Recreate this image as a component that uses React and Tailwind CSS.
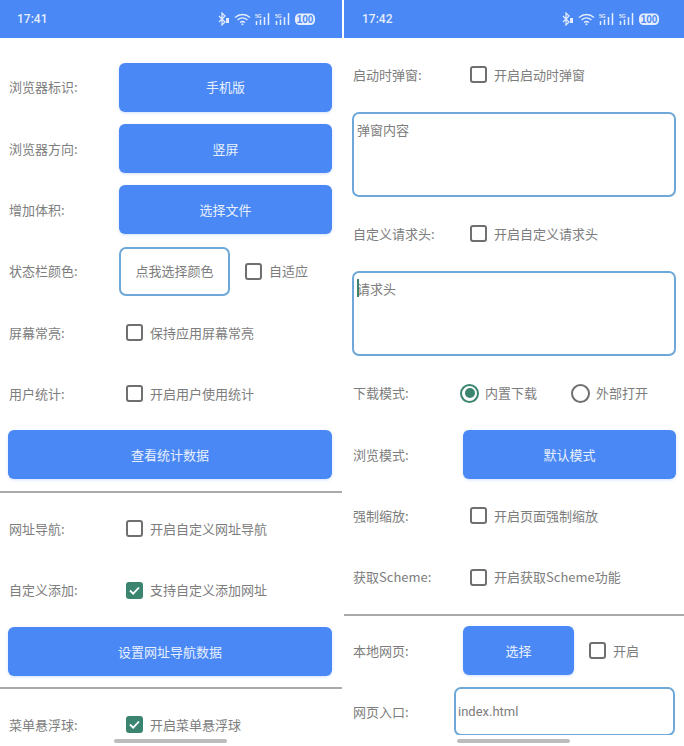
import React from "react";

const font = { fontFamily: '"Noto Sans CJK SC", "Noto Sans", sans-serif' };

function StatusIcons() {
  return (
    <svg width="98" height="14" viewBox="0 0 98 14" fill="none" stroke="#e4edfd" className="block">
      {/* bluetooth */}
      <path d="M1 4l6 6-3 3V1l3 3-6 6" strokeWidth="1.2" />
      <rect x="8" y="6" width="3" height="5" fill="#e4edfd" stroke="none" />
      {/* wifi */}
      <path d="M17 5.500c4.500-4 10.500-4 15 0M19.500 8c3-2.500 7-2.500 10 0M22 10.500c1.500-1.200 3.500-1.200 5 0" strokeWidth="1.3" />
      <circle cx="24.500" cy="12.300" r="1" fill="#e4edfd" stroke="none" />
      {/* 5g signal */}
      <Signal x={37} />
      <Signal x={57} />
      {/* battery */}
      <rect x="77" y="1.500" width="20" height="11.500" rx="4.500" fill="#e4edfd" stroke="none" />
      <text x="87" y="10.700" textAnchor="middle" fontSize="10" fontWeight="700" fill="#4a88f5" stroke="none" style={{ fontFamily: '"Liberation Sans", sans-serif' }}>100</text>
    </svg>
  );
}

function Signal({ x }) {
  return (
    <g transform={`translate(${x} 0)`}>
      <text x="0" y="5.500" fontSize="5" fontWeight="700" fill="#e4edfd" stroke="none" style={{ fontFamily: '"Liberation Sans", sans-serif' }}>5G</text>
      <path d="M1.500 9v4M5.500 7.500V13M9.500 5v8M13.500 1v12" strokeWidth="1.500" />
    </g>
  );
}

function StatusBar({ time, left, right }) {
  return (
    <div className={`flex h-[38px] items-center justify-between bg-[#4a88f5] ${left} ${right}`}>
      <span className="text-[12px] font-medium text-[#e4edfd]" style={{ fontFamily: '"Roboto", sans-serif' }}>{time}</span>
      <StatusIcons />
    </div>
  );
}

function Row({ label, w, children }) {
  return (
    <div className="flex h-[61.3px] items-center">
      <span className={`shrink-0 text-[13px] text-[#7d7d7d] ${w}`}>{label}</span>
      {children}
    </div>
  );
}

function Check({ label, checked, className = "" }) {
  return (
    <div className={`flex items-center gap-[7px] ${className}`}>
      {checked ? (
        <span className="flex h-[17px] w-[17px] items-center justify-center rounded-[3px] bg-[#3b8570]">
          <svg width="13" height="13" viewBox="0 0 13 13" fill="none" stroke="#fff" strokeWidth="1.800">
            <path d="M2 6.500l3.200 3.200L11 3.500" />
          </svg>
        </span>
      ) : (
        <span className="h-[17px] w-[17px] rounded-[3px] border-2 border-[#6f6f6f]" />
      )}
      <span className="text-[13px] text-[#7d7d7d]">{label}</span>
    </div>
  );
}

function Radio({ label, checked, className = "" }) {
  return (
    <div className={`flex items-center gap-[6px] ${className}`}>
      {checked ? (
        <span className="flex h-[19px] w-[19px] items-center justify-center rounded-full border-2 border-[#3b8570]">
          <span className="h-[10px] w-[10px] rounded-full bg-[#3b8570]" />
        </span>
      ) : (
        <span className="h-[19px] w-[19px] rounded-full border-2 border-[#6f6f6f]" />
      )}
      <span className="text-[13px] text-[#7d7d7d]">{label}</span>
    </div>
  );
}

function Btn({ children, className = "" }) {
  return (
    <div className={`flex h-[49px] items-center justify-center rounded-[6px] bg-[#4a88f5] text-[13px] text-[#e8f0fe] shadow-[0_1px_3px_rgba(74,136,245,0.25)] ${className}`}>
      {children}
    </div>
  );
}

function Bar({ className = "" }) {
  return <div className={`h-[2px] bg-[#a9a9a9] ${className}`} />;
}

function NavBar() {
  return (
    <div className="absolute inset-x-0 bottom-0 flex h-[11px] justify-center bg-white pr-[2px] pt-[4px]">
      <div className="h-[4px] w-[113px] rounded-full bg-[#bcbcbc]" />
    </div>
  );
}

function LeftPhone() {
  const w = "w-[110px]";
  return (
    <div className="relative h-[746px] w-[342px] overflow-hidden bg-white">
      <StatusBar time="17:41" left="pl-[17px]" right="pr-[26px]" />
      <div className="pl-[9px] pr-[10px] pt-[18.5px]">
        <Row label="浏览器标识:" w={w}><Btn className="w-[213px]">手机版</Btn></Row>
        <Row label="浏览器方向:" w={w}><Btn className="w-[213px]">竖屏</Btn></Row>
        <Row label="增加体积:" w={w}><Btn className="w-[213px]">选择文件</Btn></Row>
        <Row label="状态栏颜色:" w={w}>
          <div className="flex h-[49px] w-[111px] items-center justify-center rounded-[7px] border-2 border-[#6ea8d8] text-[13px] text-[#7d7d7d]">点我选择颜色</div>
          <Check label="自适应" className="ml-[15px]" />
        </Row>
        <Row label="屏幕常亮:" w={w}><Check label="保持应用屏幕常亮" className="ml-[7px]" /></Row>
        <Row label="用户统计:" w={w}><Check label="开启用户使用统计" className="ml-[7px]" /></Row>
        <div className="flex h-[61.3px] items-center"><Btn className="-ml-px w-[324px]">查看统计数据</Btn></div>
      </div>
      <Bar className="mt-[5.5px]" />
      <div className="pl-[9px] pr-[10px] pt-[5px]">
        <Row label="网址导航:" w={w}><Check label="开启自定义网址导航" className="ml-[7px]" /></Row>
        <Row label="自定义添加:" w={w}><Check checked label="支持自定义添加网址" className="ml-[7px]" /></Row>
        <div className="flex h-[61.3px] items-center"><Btn className="-ml-px w-[324px]">设置网址导航数据</Btn></div>
      </div>
      <Bar className="mt-[5px]" />
      <div className="pl-[9px] pr-[10px] pt-[5px]">
        <Row label="菜单悬浮球:" w={w}><Check checked label="开启菜单悬浮球" className="ml-[7px]" /></Row>
      </div>
      <NavBar />
    </div>
  );
}

function Area({ text, caret }) {
  return (
    <div className="relative -ml-px h-[85px] w-[324px] rounded-[7px] border-2 border-[#6ea8d8] px-[3px] py-[6px] text-[13px] leading-[20px] text-[#7d7d7d]">
      {caret && <span className="absolute left-[3px] top-[6px] h-[18px] w-[2px] bg-[#3b8570]" />}
      {text}
    </div>
  );
}

function RightPhone() {
  const w = "w-[110px]";
  return (
    <div className="relative h-[746px] w-[340px] overflow-hidden bg-white">
      <StatusBar time="17:42" left="pl-[18px]" right="pr-[24px]" />
      <div className="pl-[9px] pr-[8px] pt-[6px]">
        <Row label="启动时弹窗:" w={w}><Check label="开启启动时弹窗" className="ml-[7px]" /></Row>
        <div className="pt-[7px]"><Area text="弹窗内容" /></div>
        <div className="pt-[6px]">
          <Row label="自定义请求头:" w={w}><Check label="开启自定义请求头" className="ml-[7px]" /></Row>
        </div>
        <div className="pt-[6px]"><Area text="请求头" caret /></div>
        <div className="pt-[7px]">
          <Row label="下载模式:" w={w}>
            <Radio checked label="内置下载" className="-ml-[3px]" />
            <Radio label="外部打开" className="ml-[34px]" />
          </Row>
        </div>
        <Row label="浏览模式:" w={w}><Btn className="w-[213px]">默认模式</Btn></Row>
        <Row label="强制缩放:" w={w}><Check label="开启页面强制缩放" className="ml-[7px]" /></Row>
        <Row label="获取Scheme:" w={w}><Check label="开启获取Scheme功能" className="ml-[7px]" /></Row>
      </div>
      <Bar className="mt-[6px]" />
      <div className="pl-[9px] pr-[8px] pt-[4px]">
        <Row label="本地网页:" w={w}>
          <Btn className="w-[111px]">选择</Btn>
          <Check label="开启" className="ml-[15px]" />
        </Row>
        <Row label="网页入口:" w="w-[102px]">
          <div className="-ml-px flex h-[49px] w-[221px] items-center rounded-[7px] border-2 border-[#6ea8d8] pl-[2px] text-[13px] text-[#7d7d7d]" style={{ fontFamily: '"Roboto", sans-serif' }}>index.html</div>
        </Row>
      </div>
      <NavBar />
    </div>
  );
}

export default function App() {
  return (
    <div className="flex h-[746px] w-[684px] gap-[2px] overflow-hidden bg-white" style={font}>
      <LeftPhone />
      <RightPhone />
    </div>
  );
}
